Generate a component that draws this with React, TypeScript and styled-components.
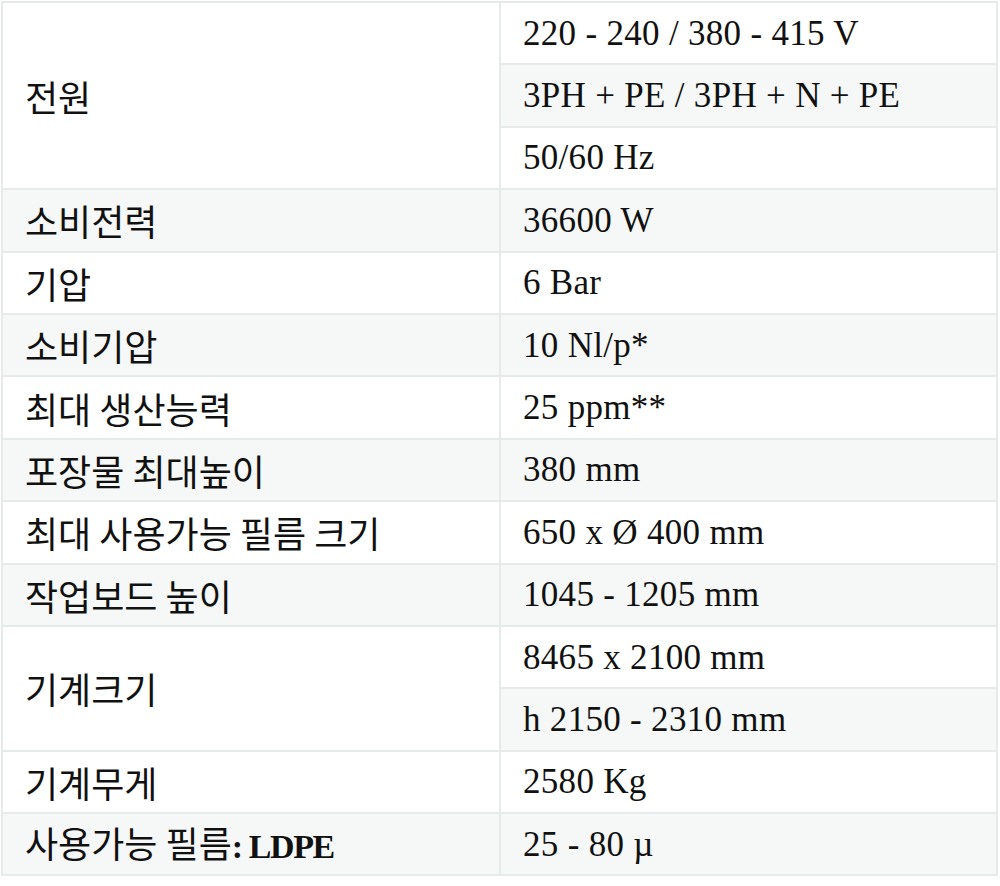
import React from "react";
import styled, { createGlobalStyle } from "styled-components";

const Global = createGlobalStyle`
  html, body { margin: 0; padding: 0; background: #ffffff; }
  body { font-family: "Liberation Serif", "Noto Sans CJK KR", serif; color: #111; }
`;

const Wrap = styled.div`
  padding: 1px 2px 0 1px;
`;

const Table = styled.table`
  width: 997px;
  border-collapse: collapse;
  table-layout: fixed;
  border: 2px solid #e6eaea;
`;

const Row = styled.tr<{ $striped: boolean }>`
  background: ${(p) => (p.$striped ? "#f6f8f8" : "#ffffff")};
`;

const Label = styled.td`
  width: 498px;
  box-sizing: border-box;
  border: 2px solid #e6eaea;
  padding: 0 22px;
  height: 62.4px;
  font-family: "Noto Sans CJK KR", "Liberation Serif", sans-serif;
  font-size: 36px;
  line-height: 1;
  vertical-align: middle;
`;

const Value = styled.td`
  box-sizing: border-box;
  border: 2px solid #e6eaea;
  padding: 0 22px;
  height: 62.4px;
  font-family: "Liberation Serif", "Noto Sans CJK KR", serif;
  font-size: 35px;
  letter-spacing: 0.3px;
  line-height: 1;
  vertical-align: middle;
`;

const Strong = styled.b`
  font-family: "Liberation Serif", serif;
  font-size: 34px;
  letter-spacing: -1.4px;
  font-weight: 700;
`;

type Item = { label?: React.ReactNode; span?: number; value: string };

const items: Item[] = [
  { label: "전원", span: 3, value: "220 - 240 / 380 - 415 V" },
  { value: "3PH + PE / 3PH + N + PE" },
  { value: "50/60 Hz" },
  { label: "소비전력", value: "36600 W" },
  { label: "기압", value: "6 Bar" },
  { label: "소비기압", value: "10 Nl/p*" },
  { label: "최대 생산능력", value: "25 ppm**" },
  { label: "포장물 최대높이", value: "380 mm" },
  { label: "최대 사용가능 필름 크기", value: "650 x Ø 400 mm" },
  { label: "작업보드 높이", value: "1045 - 1205 mm" },
  { label: "기계크기", span: 2, value: "8465 x 2100 mm" },
  { value: "h 2150 - 2310 mm" },
  { label: "기계무게", value: "2580 Kg" },
  {
    label: (
      <>
        사용가능 필름<Strong>: LDPE</Strong>
      </>
    ),
    value: "25 - 80 µ",
  },
];

export default function App() {
  return (
    <>
      <Global />
      <Wrap>
        <Table>
          <tbody>
            {items.map((it, i) => (
              <Row key={i} $striped={i % 2 === 1}>
                {it.label !== undefined && (
                  <Label rowSpan={it.span ?? 1}>{it.label}</Label>
                )}
                <Value>{it.value}</Value>
              </Row>
            ))}
          </tbody>
        </Table>
      </Wrap>
    </>
  );
}
